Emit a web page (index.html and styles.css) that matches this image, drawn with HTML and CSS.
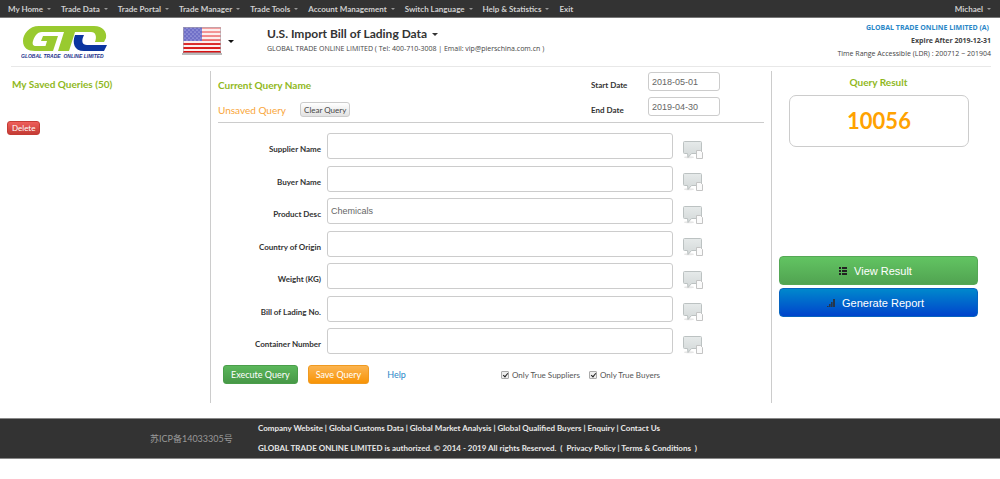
FILE: index.html
```html
<!DOCTYPE html>
<html lang="en">
<head>
<meta charset="utf-8">
<title>U.S. Import Bill of Lading Data</title>
<link rel="stylesheet" href="styles.css">
</head>
<body>
<svg class="defs" aria-hidden="true">
  <defs>
    <linearGradient id="bubble-fill" x1="0" y1="0" x2="0" y2="1"><stop offset="0" stop-color="#e6eaea"/><stop offset="1" stop-color="#d3d8d8"/></linearGradient>
    <symbol id="bubble" viewBox="0 0 20 18">
      <ellipse cx="6" cy="16.3" rx="5" ry="1" fill="#e6e6e6"/>
      <path d="M1.500 .5h16a1 1 0 0 1 1 1v10a1 1 0 0 1-1 1H8.500L5 16.500l-.5-4h-3a1 1 0 0 1-1-1v-10a1 1 0 0 1 1-1z" fill="url(#bubble-fill)" stroke="#bcc2c2"/>
      <path d="M13.500 9.500h4l2 2v6h-6z" fill="#fafafa" stroke="#c4c4c4"/>
    </symbol>
  </defs>
</svg>
<nav class="nav">
  <a class="nav-link caret" href="#">My Home</a>
  <a class="nav-link caret" href="#">Trade Data</a>
  <a class="nav-link caret" href="#">Trade Portal</a>
  <a class="nav-link caret" href="#">Trade Manager</a>
  <a class="nav-link caret" href="#">Trade Tools</a>
  <a class="nav-link caret" href="#">Account Management</a>
  <a class="nav-link caret" href="#">Switch Language</a>
  <a class="nav-link caret" href="#">Help &amp; Statistics</a>
  <a class="nav-link" href="#">Exit</a>
  <a class="nav-link caret nav-user" href="#">Michael</a>
</nav>
<header class="header">
  <a class="logo" href="#" aria-label="GTO home">
    <svg width="86" height="34" viewBox="0 0 86 34">
      <path fill="#99ca2f" d="M43 0H18C8 0 2 8 2 15c0 7 5 10 12 10h18l5-15H22l-2 5h6l-1.500 5H15c-3 0-4-2-3-5 1-4 4-9 9-9h22z"/>
      <path fill="#99ca2f" d="M40 0h33c9 0 13 6 12 12l-2 4h-9c2-5 1-10-4-10H54l-6 19H37l6-19h-5z"/>
      <path fill="#0b35a0" d="M54 9h9c-3 6-2 10 3 10h20l-3 6H63c-10 0-12-8-9-16z"/>
      <text class="logo-text" x="0" y="32">GLOBAL TRADE&#160; ONLINE LIMITED</text>
    </svg>
  </a>
  <button class="country caret" type="button" aria-label="United States">
    <svg width="40" height="28" viewBox="0 0 40 28">
      <defs><linearGradient id="stripe" gradientUnits="userSpaceOnUse" x1="0" y1="0" x2="0" y2="26"><stop offset="0" stop-color="#f5a3a3"/><stop offset=".5" stop-color="#ef7f80"/><stop offset=".58" stop-color="#dc3434"/><stop offset="1" stop-color="#d80c0c"/></linearGradient>
      <pattern id="stars" width="4" height="4" patternUnits="userSpaceOnUse"><circle cx="1" cy="1" r=".6" fill="#d8d8f5"/><circle cx="3" cy="3" r=".6" fill="#d8d8f5"/></pattern></defs>
      <rect x="0" y="26" width="40" height="2" fill="#bbb"/>
      <rect x="1" width="38" height="26" fill="#fbeeee"/>
      <path fill="url(#stripe)" d="M1 0h38v2H1zM1 4h38v2H1zM1 8h38v2H1zM1 12h38v2H1zM1 16h38v2H1zM1 20h38v2H1zM1 24h38v2H1z"/>
      <path fill="#7070c8" d="M1 0h19v14H1z"/><path fill="url(#stars)" d="M1 0h19v14H1z"/>
      <path fill="none" stroke="#a9a0a8" stroke-opacity=".6" d="M1.500 .5h37v25h-37z"/>
    </svg>
  </button>
  <div class="heading">
    <h1 class="title caret">U.S. Import Bill of Lading Data</h1>
    <p class="contact">GLOBAL TRADE ONLINE LIMITED ( Tel: 400-710-3008 | Email: vip@pierschina.com.cn )</p>
  </div>
  <div class="account">
    <a class="account-name" href="#">GLOBAL TRADE ONLINE LIMITED (A)</a>
    <span class="account-expire">Expire After 2019-12-31</span>
    <span>Time Range Accessible (LDR) : 200712 ~ 201904</span>
  </div>
</header>
<main class="main">
  <aside class="saved">
    <h2 class="section-title">My Saved Queries (50)</h2>
    <button class="btn btn-delete" type="button">Delete</button>
  </aside>
  <form class="query">
    <div class="query-head">
      <div class="query-name">
        <h2 class="section-title">Current Query Name</h2>
        <div class="unsaved">Unsaved Query <button class="btn btn-clear" type="button">Clear Query</button></div>
      </div>
      <div class="dates">
        <label for="start">Start Date</label><input class="input" id="start" type="text" value="2018-05-01">
        <label for="end">End Date</label><input class="input" id="end" type="text" value="2019-04-30">
      </div>
    </div>
    <div class="fields">
      <div class="field"><label for="supplier">Supplier Name</label><input class="input" id="supplier" type="text"><button class="lookup" type="button" aria-label="Supplier list"><svg width="20" height="18"><use href="#bubble"/></svg></button></div>
      <div class="field"><label for="buyer">Buyer Name</label><input class="input" id="buyer" type="text"><button class="lookup" type="button" aria-label="Buyer list"><svg width="20" height="18"><use href="#bubble"/></svg></button></div>
      <div class="field"><label for="product">Product Desc</label><input class="input" id="product" type="text" value="Chemicals"><button class="lookup" type="button" aria-label="Product list"><svg width="20" height="18"><use href="#bubble"/></svg></button></div>
      <div class="field"><label for="origin">Country of Origin</label><input class="input" id="origin" type="text"><button class="lookup" type="button" aria-label="Country list"><svg width="20" height="18"><use href="#bubble"/></svg></button></div>
      <div class="field"><label for="weight">Weight (KG)</label><input class="input" id="weight" type="text"><button class="lookup" type="button" aria-label="Weight list"><svg width="20" height="18"><use href="#bubble"/></svg></button></div>
      <div class="field"><label for="lading">Bill of Lading No.</label><input class="input" id="lading" type="text"><button class="lookup" type="button" aria-label="Bill list"><svg width="20" height="18"><use href="#bubble"/></svg></button></div>
      <div class="field"><label for="container">Container Number</label><input class="input" id="container" type="text"><button class="lookup" type="button" aria-label="Container list"><svg width="20" height="18"><use href="#bubble"/></svg></button></div>
    </div>
    <div class="actions">
      <button class="btn btn-execute" type="button">Execute Query</button>
      <button class="btn btn-save" type="button">Save Query</button>
      <a class="help" href="#">Help</a>
      <div class="checks">
        <label class="check"><input type="checkbox" checked>Only True Suppliers</label>
        <label class="check"><input type="checkbox" checked>Only True Buyers</label>
      </div>
    </div>
  </form>
  <aside class="result">
    <h2 class="section-title">Query Result</h2>
    <output class="count">10056</output>
    <div class="result-actions">
      <button class="btn btn-large btn-view" type="button"><svg width="8" height="8" viewBox="0 0 8 8"><path fill="#222" d="M0 0h2v2H0zM3 0h5v2H3zM0 3h2v2H0zM3 3h5v2H3zM0 6h2v2H0zM3 6h5v2H3z"/></svg>View Result</button>
      <button class="btn btn-large btn-report" type="button"><svg width="8" height="8" viewBox="0 0 8 8"><path fill="#26364a" d="M0 7h1.600v1H0zM2 5h1.600v3H2zM4 3h1.600v5H4zM6 0h2v8H6z"/></svg>Generate Report</button>
    </div>
  </aside>
</main>
<footer class="footer">
  <div class="icp">苏ICP备14033305号</div>
  <div class="legal">
    <p><a href="#">Company Website</a> | <a href="#">Global Customs Data</a> | <a href="#">Global Market Analysis</a> | <a href="#">Global Qualified Buyers</a> | <a href="#">Enquiry</a> | <a href="#">Contact Us</a></p>
    <p>GLOBAL TRADE ONLINE LIMITED is authorized. © 2014 - 2019 All rights Reserved.&nbsp; (&nbsp; <a href="#">Privacy Policy</a> | <a href="#">Terms &amp; Conditions</a>&nbsp; )</p>
  </div>
</footer>
</body>
</html>
```
FILE: styles.css
```css
* { box-sizing: border-box; }
body { margin: 0; background: #fff; color: #333; font: 8px/12px "Trebuchet MS", Lato, "Noto Sans CJK SC", sans-serif; }
h1, h2, p { margin: 0; }
a { color: inherit; text-decoration: none; }
button, input { font: inherit; }
svg { display: block; }
.defs { position: absolute; width: 0; height: 0; }

.caret::after { content: ""; display: inline-block; border: 2px solid transparent; border-top-color: currentColor; border-bottom: 0; margin-left: 4px; vertical-align: middle; }

.nav { display: flex; align-items: center; gap: 10px; height: 18px; padding: 0 9px 0 8px; background: #333; border-bottom: 1px solid #777; color: #d0d0d0; font-weight: 700; }
.nav-link.caret::after { border-top-color: #999; }
.nav-user { margin-left: auto; }

.header { display: flex; align-items: flex-start; height: 49px; margin: 0 9px 0 11px; border-bottom: 1px solid #e8e8e8; }
.logo { width: 171px; padding: 8px 0 0 10px; }
.logo-text { font: italic 700 5px "Liberation Sans", Arial, sans-serif; fill: #23318c; }
.country { display: flex; align-items: center; width: 85px; margin: 9px 0 0; padding: 0; border: 0; background: none; color: #111; text-align: left; }
.country.caret::after { margin-left: 6px; border-width: 3px 3px 0; }
.heading { flex: 1; padding-top: 9px; }
.title { font-size: 12px; line-height: 14px; color: #333; }
.title.caret::after { border-width: 3px 3px 0; margin-left: 5px; }
.contact { margin-top: 2px; color: #444; font-family: "Open Sans", sans-serif; font-size: 7px; }
.account { display: flex; flex-direction: column; align-items: flex-end; gap: 1px; padding-top: 4px; color: #444; font-family: "Open Sans", sans-serif; font-size: 7px; }
.account-name { padding-right: 2px; color: #2a87c8; font-weight: 700; }
.account-expire { font-weight: 700; }

.main { display: grid; grid-template-columns: 210px 1fr 228px; min-height: 332px; margin: 4px 0 15px; }
.section-title { color: #90b81c; font-size: 10px; line-height: 14px; }
.saved { padding: 6px 7px; }
.saved .section-title { padding-left: 5px; }
.btn { border: 1px solid #ccc; border-radius: 3px; padding: 0 6px; line-height: 12px; cursor: pointer; }
.btn-delete { height: 14px; margin-top: 30px; padding: 0 4px; border-color: #c43c35; background: linear-gradient(#ee5f5b, #c43c35); color: #fff; }

.query { display: flex; flex-direction: column; padding: 0 7px; border: solid #ccc; border-width: 0 1px; }
.query-head { display: flex; justify-content: space-between; height: 52px; padding-right: 44px; border-bottom: 1px solid #ccc; }
.query-name { padding-top: 7px; }
.unsaved { display: flex; align-items: center; gap: 14px; margin-top: 10px; color: #f9a63a; font-size: 10px; }
.btn-clear { height: 15px; padding: 0 3px; background: linear-gradient(#fff, #e2e2e2); color: #444; font-size: 8px; }
.dates { display: grid; grid-template-columns: 57px 72px; grid-auto-rows: 19px; gap: 6px 0; align-items: center; padding-top: 1px; color: #333; font-weight: 700; }
.dates label { padding-top: 6px; }
.input { min-width: 0; width: 100%; height: 19px; padding: 0 3px; border: 1px solid #ccc; border-radius: 3px; background: #fff; color: #666; font: 9px "Liberation Sans", Arial, sans-serif; }
.fields { display: flex; flex-direction: column; flex: 1; justify-content: space-between; padding: 10px 65px 0 0; }
.field { display: grid; grid-template-columns: 103px 1fr 20px; column-gap: 6px; align-items: center; }
.field label { padding-top: 6px; color: #333; font-weight: 700; text-align: right; }
.field .input { height: 26px; }
.lookup { margin: 7px 0 0 4px; padding: 0; border: 0; background: none; cursor: pointer; }
.actions { display: flex; align-items: center; height: 19px; margin: 11px 0 19px 5px; padding-right: 104px; }
.btn-execute, .btn-save { height: 19px; padding: 0 7px; color: #fff; font-size: 9px; }
.btn-execute { border-color: #4a9e4a; background: linear-gradient(#5bb75b, #479847); }
.btn-save { margin-left: 10px; border-color: #f09a20; background: linear-gradient(#fbb450, #f89406); }
.help { margin-left: 18px; color: #2a87c8; font-size: 9px; }
.checks { display: flex; gap: 9px; margin-left: auto; color: #555; }
.check { display: flex; align-items: center; gap: 3px; }
.check input { position: relative; appearance: none; width: 8px; height: 8px; margin: 1px 0 0; border: 1px solid #aaa; border-radius: 1px; background: #eee; }
.check input:checked::after { content: ""; position: absolute; left: 2px; top: 0; width: 2px; height: 4px; border: solid #222; border-width: 0 1px 1px 0; transform: rotate(40deg); }

.result { display: flex; flex-direction: column; padding: 4px 22px 0 7px; }
.result .section-title { text-align: center; }
.count { display: grid; place-items: center; height: 52px; margin: 6px 9px 0 10px; border: 1px solid #ccc; border-radius: 7px; color: #ffa200; font-size: 22px; font-weight: 700; }
.result-actions { display: grid; gap: 3px; margin-top: 109px; }
.btn-large { display: flex; align-items: center; justify-content: center; gap: 7px; height: 29px; padding: 0 12px 0 6px; border-radius: 4px; color: #fff; font: 11px "Liberation Sans", Arial, sans-serif; }
.btn-view { border-color: #55a855; background: linear-gradient(#62c462, #51a351); }
.btn-report { border-color: #0664c0; background: linear-gradient(#0088cc, #0044cc); }

.footer { display: grid; grid-template-columns: 108px 1fr; align-items: center; height: 41px; padding-left: 150px; border: solid #888; border-width: 1px 0; background: #333; color: #e8e8e8; }
.icp { color: #999; font-size: 9px; }
.legal { display: grid; gap: 8px; padding-bottom: 2px; font-weight: 700; }
```
